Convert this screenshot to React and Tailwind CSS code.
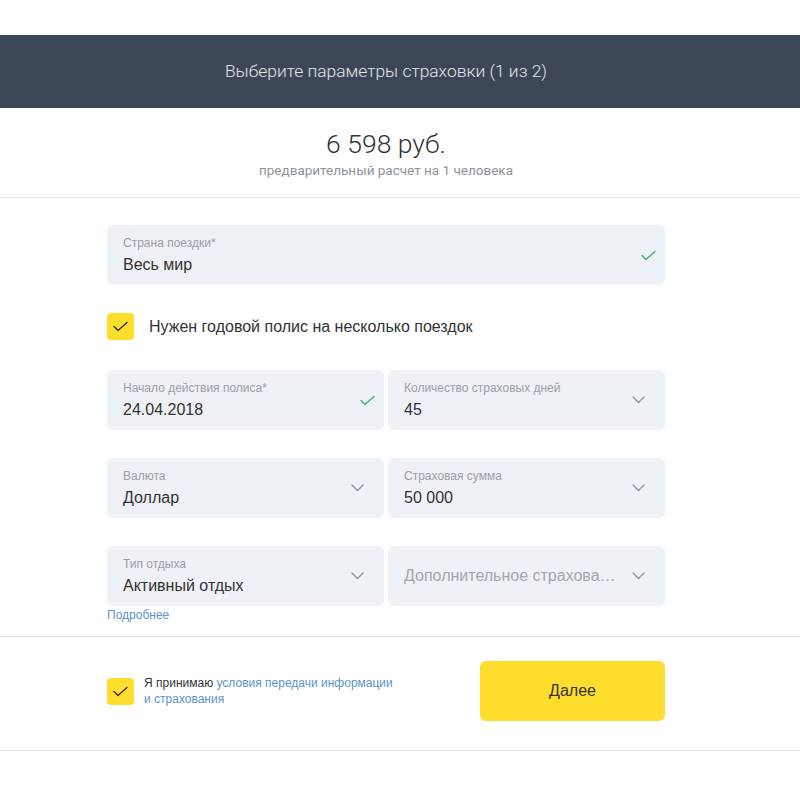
import React from "react";

function Check({ className }) {
  return (
    <svg width="15" height="11" viewBox="0 0 15 11" fill="none" className={className}>
      <path d="M1 5.5l4 4L14 1.5" stroke="currentColor" strokeWidth="1.4" strokeLinecap="round" strokeLinejoin="round" />
    </svg>
  );
}

function Chevron() {
  return (
    <svg width="13" height="8" viewBox="0 0 13 8" fill="none" className="text-[#9299a2]">
      <path d="M1 1l5.5 5.5L12 1" stroke="currentColor" strokeWidth="1.5" strokeLinecap="round" strokeLinejoin="round" />
    </svg>
  );
}

function Field({ label, value, icon, placeholder }) {
  const checked = icon === "check";
  return (
    <div className={`min-w-0 h-[60px] rounded-md bg-[#eef1f5] flex items-center pl-4 ${checked ? "pr-[9px]" : "pr-5"}`}>
      <div className="flex-1 min-w-0">
        {placeholder ? (
          <div className="text-[16px] text-[#a3a8af] truncate">{placeholder}</div>
        ) : (
          <>
            <div className="text-[12px] leading-[15px] text-[#9ba0a7]">{label}</div>
            <div className="text-[16px] leading-[20px] mt-[4px] text-[#333]">{value}</div>
          </>
        )}
      </div>
      <div className="ml-3 shrink-0">
        {checked ? <Check className="text-[#3cb371]" /> : <Chevron />}
      </div>
    </div>
  );
}

function Box() {
  return (
    <div className="w-[27px] h-[27px] shrink-0 rounded bg-[#ffdd2d] flex items-center justify-center text-[#333]">
      <Check />
    </div>
  );
}

export default function App() {
  return (
    <div className="w-[800px] h-[800px] bg-white" style={{ fontFamily: "'Liberation Sans', Arial, sans-serif" }}>
      <div className="h-[35px]" />
      <div className="h-[73px] bg-[#3d4656] flex items-center justify-center pr-[28px]">
        <span className="text-[17.4px] text-[#e4e7ec] font-light" style={{ fontFamily: "Roboto, sans-serif" }}>
          Выберите параметры страховки (1 из 2)
        </span>
      </div>
      <div className="h-[90px] border-b border-[#e3e3e3] flex flex-col items-center pt-[20px] pr-[28px]">
        <div className="text-[26.5px] leading-[32px] font-light text-[#333]" style={{ fontFamily: "Roboto, sans-serif" }}>
          6 598 руб.
        </div>
        <div className="text-[13.5px] leading-[16px] mt-[2px] text-[#8e939a]" style={{ fontFamily: "Roboto, sans-serif" }}>
          предварительный расчет на 1 человека
        </div>
      </div>
      <div className="w-[558px] ml-[107px] pt-[27px] pb-[13px]">
        <Field label="Страна поездки*" value="Весь мир" icon="check" />
        <div className="flex items-center mt-[28px] mb-[30px]">
          <Box />
          <span className="ml-[15px] text-[16px] text-[#333]">Нужен годовой полис на несколько поездок</span>
        </div>
        <div className="grid grid-cols-2 gap-x-[4px] gap-y-[28px]">
          <Field label="Начало действия полиса*" value="24.04.2018" icon="check" />
          <Field label="Количество страховых дней" value="45" />
          <Field label="Валюта" value="Доллар" />
          <Field label="Страховая сумма" value="50 000" />
          <Field label="Тип отдыха" value="Активный отдых" />
          <Field placeholder="Дополнительное страхование" />
        </div>
        <div className="text-[12px] leading-[16px] mt-[1px] text-[#5e93c9]">Подробнее</div>
      </div>
      <div className="border-t border-b border-[#e3e3e3] h-[115px]">
        <div className="w-[558px] ml-[107px] flex items-center justify-between h-full pb-[5px]">
          <div className="flex items-center">
            <Box />
            <div className="ml-[10px] text-[12px] leading-[16px] text-[#333]">
              Я принимаю <span className="text-[#5e93c9]">условия передачи информации</span>
              <br />
              <span className="text-[#5e93c9]">и страхования</span>
            </div>
          </div>
          <button className="w-[185px] h-[60px] rounded-md bg-[#ffdd2d] text-[16px] text-[#333]">Далее</button>
        </div>
      </div>
    </div>
  );
}
